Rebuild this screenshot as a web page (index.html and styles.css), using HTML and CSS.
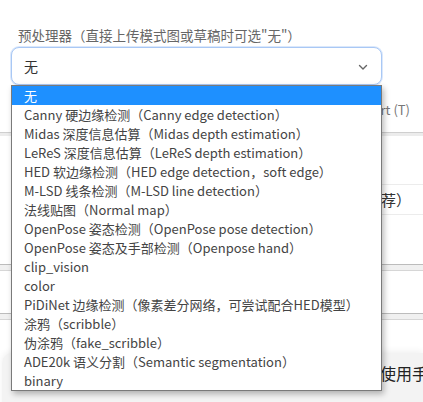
FILE: index.html
```html
<!DOCTYPE html>
<html lang="zh">
<head>
  <meta charset="UTF-8" />
  <title>预处理器</title>
  <link rel="stylesheet" href="styles.css">
</head>
<body>

  <div class="panel">
    <label class="field-label">预处理器（直接上传模式图或草稿时可选"无"）</label>

    <div class="select-wrap">
      <div class="select">
        <span>无</span>
        <svg class="chevron" width="12" height="12" viewBox="0 0 12 12">
          <path d="M2.5 4.5 L6 8 L9.5 4.5" fill="none" stroke="#666" stroke-width="1.4" stroke-linecap="round" stroke-linejoin="round"/>
        </svg>
      </div>

      <!-- open dropdown list -->
      <ul class="options">
        <li class="selected">无</li>
        <li>Canny 硬边缘检测（Canny edge detection）</li>
        <li>Midas 深度信息估算（Midas depth estimation）</li>
        <li>LeReS 深度信息估算（LeReS depth estimation）</li>
        <li>HED 软边缘检测（HED edge detection，soft edge）</li>
        <li>M-LSD 线条检测（M-LSD line detection）</li>
        <li>法线贴图（Normal map）</li>
        <li>OpenPose 姿态检测（OpenPose pose detection）</li>
        <li>OpenPose 姿态及手部检测（Openpose hand）</li>
        <li>clip_vision</li>
        <li>color</li>
        <li>PiDiNet 边缘检测（像素差分网络，可尝试配合HED模型）</li>
        <li>涂鸦（scribble）</li>
        <li>伪涂鸦（fake_scribble）</li>
        <li>ADE20k 语义分割（Semantic segmentation）</li>
        <li>binary</li>
      </ul>
    </div>

    <div class="flags">
      <span>Invert (T)</span>
    </div>

    <div class="band"></div>

    <div class="model-box">
      <span>（推荐）</span>
    </div>

    <div class="band band-slider"></div>
    <div class="band band-slider second"></div>
  </div>

  <div class="footer-card">
    <span>使用手册</span>
  </div>

</body>
</html>
```

FILE: styles.css
```css
body {
  margin: 0;
  font-family: "Noto Sans CJK SC", "Noto Sans", sans-serif;
  background-color: #fff;
  color: #333;
  height: 402px;
  overflow: hidden;
}

.panel {
  padding: 25px 0 0 11px;
}

.field-label {
  display: block;
  padding-left: 7px;
  font-size: 13.5px;
  line-height: 20px;
  color: #666;
}

.select-wrap {
  position: relative;
  width: 371px;
  margin-top: 2px;
}

.select {
  display: flex;
  align-items: center;
  justify-content: space-between;
  height: 36px;
  padding: 0 12px 0 12px;
  border: 1px solid #a9c8f5;
  border-radius: 8px;
  box-shadow: 0 0 0 1px #dbe8fb;
  background-color: #fff;
  font-size: 14px;
  color: #333;
}

.chevron {
  margin-top: 1px;
}

.options {
  position: absolute;
  top: 38px;
  left: 0;
  right: 0;
  z-index: 10;
  margin: 0;
  padding: 0;
  list-style: none;
  background-color: #fff;
  border: 1px solid #7a7a7a;
  box-shadow: 2px 3px 6px rgba(0, 0, 0, 0.28);
}

.options li {
  height: 19px;
  line-height: 19px;
  padding-left: 12px;
  font-size: 13px;
  color: #444;
  white-space: nowrap;
}

.options li.selected {
  background-color: #1e90ff;
  color: #fff;
}

.flags {
  display: flex;
  justify-content: flex-end;
  padding-right: 13px;
  margin-top: 13px;
  font-size: 13px;
  line-height: 24px;
  color: #777;
}

.band {
  margin-top: 10px;
  margin-left: -11px;
  height: 3px;
  border-top: 1px solid #cfcfcf;
  background-color: #ececec;
}

.model-box {
  margin-top: 48px;
  height: 29px;
  display: flex;
  justify-content: flex-end;
  align-items: center;
  padding-right: 12px;
  border-top: 1px solid #ececec;
  border-bottom: 1px solid #ececec;
  font-size: 15px;
  color: #333;
  white-space: nowrap;
}

.band-slider {
  margin-top: 49px;
  height: 5px;
  border-top: 1px solid #bcbcbc;
  border-bottom: 1px solid #d6d6d6;
  background-color: #f0f0f0;
}

.band-slider.second {
  margin-top: 42px;
}

.footer-card {
  margin-top: 33px;
  margin-left: 2px;
  height: 60px;
  padding-left: 378px;
  border-radius: 10px 0 0 0;
  background-color: #f3f3f3;
  box-shadow: 0 -2px 6px rgba(0, 0, 0, 0.06);
  font-size: 16px;
  line-height: 40px;
  color: #222;
  white-space: nowrap;
  overflow: hidden;
}
```
